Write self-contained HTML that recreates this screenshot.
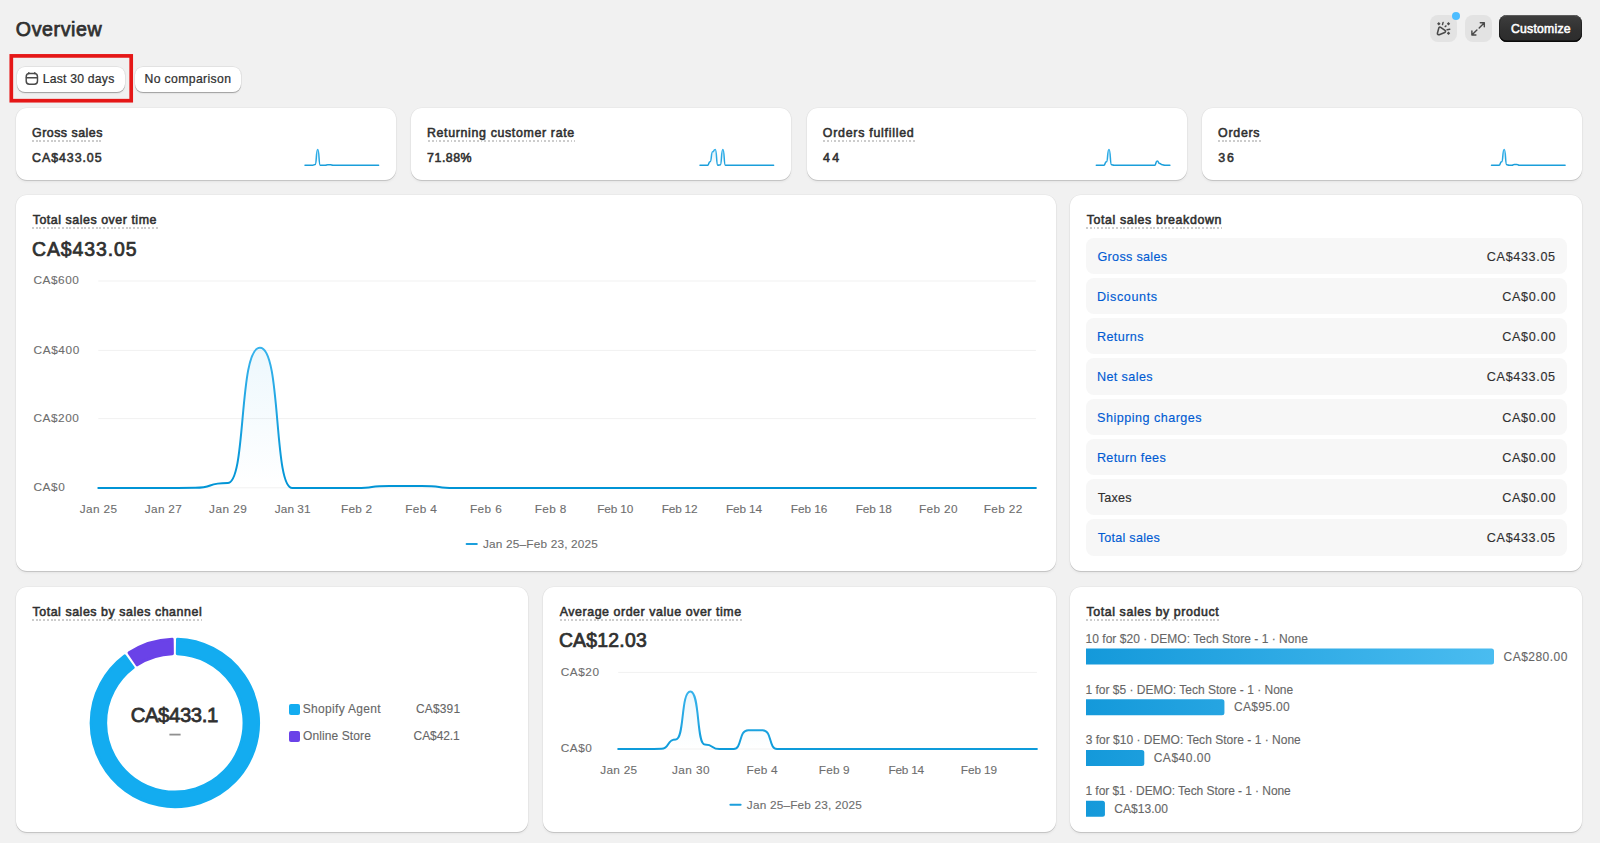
<!DOCTYPE html>
<html lang="en"><head><meta charset="utf-8"><title>Analytics · Overview</title>
<style>
*{box-sizing:border-box;margin:0;padding:0}
html,body{width:1600px;height:843px;overflow:hidden;background:#f1f1f1}
body{position:relative;font-family:"Liberation Sans", sans-serif;-webkit-font-smoothing:antialiased}
.card{position:absolute;background:#fff;border-radius:11px;box-shadow:0 1px 0 0 rgba(26,26,26,.13),0 0 0 .6px rgba(0,0,0,.05),0 1.5px 2.5px 0 rgba(26,26,26,.06)}
.row{position:absolute;left:1086.1px;width:480.7px;height:36.3px;border-radius:8px;background:#f7f7f7}
.t{position:absolute;white-space:pre;line-height:1;font-style:normal;font-weight:400;text-decoration:none;display:block}
.t i{position:absolute;height:2px;background-image:repeating-linear-gradient(90deg,#cccccc 0,#cccccc 1.9px,transparent 1.9px,transparent 3.75px)}
.viz{position:absolute;left:0;top:0;pointer-events:none}
.sq{position:absolute;width:11.4px;height:11.4px;border-radius:2px}
.btn{position:absolute;background:#fff;border-radius:8px;box-shadow:0 1px 0 0 rgba(0,0,0,.22),0 0 0 .7px rgba(0,0,0,.08),0 1.5px 1.5px rgba(0,0,0,.06)}
.ibtn{position:absolute;background:#e3e3e3;border-radius:8px;width:27px;height:27px;top:14.8px}
.pbtn{position:absolute;left:1499.2px;top:15px;width:83.2px;height:27px;border-radius:8px;background:linear-gradient(180deg,#3e3e3e 0,#313131 55%,#2c2c2c 100%);box-shadow:inset 0 1px 0 rgba(255,255,255,.16),inset 0 -1.5px 0 #0a0a0a,inset 1px 0 0 #222,inset -1px 0 0 #222}
.dot{position:absolute;left:1452.1px;top:12.1px;width:8px;height:8px;border-radius:50%;background:#4dbdff}
</style></head>
<body>
<main>
<div class="btn" style="left:16.6px;top:66.7px;width:108.7px;height:25px"></div>
<div class="btn" style="left:134.5px;top:66.7px;width:106px;height:25px"></div>
<div class="ibtn" style="left:1430.1px"></div><div class="ibtn" style="left:1464.6px"></div><div class="dot"></div>
<div class="pbtn"></div>
<section class="card" style="left:16px;top:107.8px;width:380.0px;height:72.3px"></section>
<section class="card" style="left:411.4px;top:107.8px;width:380.0px;height:72.3px"></section>
<section class="card" style="left:806.8px;top:107.8px;width:380.0px;height:72.3px"></section>
<section class="card" style="left:1202.2px;top:107.8px;width:380.0px;height:72.3px"></section>
<section class="card" style="left:16px;top:194.8px;width:1039.7px;height:376.3px"></section>
<section class="card" style="left:1070.2px;top:194.8px;width:512.1px;height:376.3px"></section>
<section class="card" style="left:16px;top:586.6px;width:512.1px;height:245.0px"></section>
<section class="card" style="left:543.1px;top:586.6px;width:512.7px;height:245.0px"></section>
<section class="card" style="left:1070.2px;top:586.6px;width:512.1px;height:245.0px"></section>
<div class="row" style="top:237.70px"></div>
<div class="row" style="top:277.92px"></div>
<div class="row" style="top:318.14px"></div>
<div class="row" style="top:358.36px"></div>
<div class="row" style="top:398.58px"></div>
<div class="row" style="top:438.80px"></div>
<div class="row" style="top:479.02px"></div>
<div class="row" style="top:519.24px"></div>
<i class="sq" style="left:288.8px;top:703.6px;background:#13acf0"></i><i class="sq" style="left:288.8px;top:730.9px;background:#6a42e8"></i>
<svg class="viz" width="1600" height="843" viewBox="0 0 1600 843">
<rect x="11.3" y="55.9" width="119.9" height="44.8" fill="none" stroke="#e51717" stroke-width="3.7"/>
<rect x="98.3" y="280.50" width="937.6" height="1" fill="#f1f1f1"/>
<rect x="98.3" y="349.90" width="937.6" height="1" fill="#f1f1f1"/>
<rect x="98.3" y="418.10" width="937.6" height="1" fill="#f1f1f1"/>
<rect x="98.3" y="487.30" width="937.6" height="1" fill="#f1f1f1"/>
<defs><linearGradient id="ml" gradientUnits="userSpaceOnUse" x1="0" y1="488.0" x2="0" y2="347.5"><stop offset="0" stop-color="#0094d5"/><stop offset="1" stop-color="#38b3ec"/></linearGradient><linearGradient id="ma" gradientUnits="userSpaceOnUse" x1="0" y1="347.5" x2="0" y2="488.0"><stop offset="0" stop-color="#2aa9e4" stop-opacity="0.085"/><stop offset="1" stop-color="#2aa9e4" stop-opacity="0"/></linearGradient></defs><path d="M98.30,488.00L130.63,488.00L162.96,488.00C182.04,488.00 173.63,487.79 195.29,487.79C214.37,487.79 205.96,483.00 227.62,483.00C246.70,483.00 238.29,347.76 259.96,347.76C281.62,347.76 273.21,488.00 292.29,488.00L324.62,488.00L356.95,488.00C376.02,488.00 367.62,486.00 389.28,486.00L421.61,486.00C443.27,486.00 434.87,488.00 453.94,488.00L486.27,488.00L518.60,488.00L550.93,488.00L583.27,488.00L615.60,488.00L647.93,488.00L680.26,488.00L712.59,488.00L744.92,488.00L777.25,488.00L809.58,488.00L841.91,488.00L874.24,488.00L906.58,488.00L938.91,488.00L971.24,488.00L1003.57,488.00L1035.90,488.00L1035.90,488.00L98.30,488.00Z" fill="url(#ma)"/><path d="M98.30,488.00L130.63,488.00L162.96,488.00C182.04,488.00 173.63,487.79 195.29,487.79C214.37,487.79 205.96,483.00 227.62,483.00C246.70,483.00 238.29,347.76 259.96,347.76C281.62,347.76 273.21,488.00 292.29,488.00L324.62,488.00L356.95,488.00C376.02,488.00 367.62,486.00 389.28,486.00L421.61,486.00C443.27,486.00 434.87,488.00 453.94,488.00L486.27,488.00L518.60,488.00L550.93,488.00L583.27,488.00L615.60,488.00L647.93,488.00L680.26,488.00L712.59,488.00L744.92,488.00L777.25,488.00L809.58,488.00L841.91,488.00L874.24,488.00L906.58,488.00L938.91,488.00L971.24,488.00L1003.57,488.00L1035.90,488.00" fill="none" stroke="url(#ml)" stroke-width="2" stroke-linecap="round" stroke-linejoin="round"/>
<rect x="465.6" y="542.9" width="12.2" height="2" rx="1" fill="#1c9fdc"/>
<rect x="618.2" y="671.90" width="418.7" height="1" fill="#f1f1f1"/>
<rect x="618.2" y="748.50" width="418.7" height="1" fill="#f1f1f1"/>
<defs><linearGradient id="vl" gradientUnits="userSpaceOnUse" x1="0" y1="749.0" x2="0" y2="691.5"><stop offset="0" stop-color="#0e9bda"/><stop offset="1" stop-color="#38b3ec"/></linearGradient><linearGradient id="va" gradientUnits="userSpaceOnUse" x1="0" y1="691.5" x2="0" y2="749.0"><stop offset="0" stop-color="#2aa9e4" stop-opacity="0.085"/><stop offset="1" stop-color="#2aa9e4" stop-opacity="0"/></linearGradient></defs><path d="M618.20,749.00L632.64,749.00L647.08,749.00C655.59,749.00 651.84,748.81 661.51,748.81C670.03,748.81 666.28,739.41 675.95,739.41C684.47,739.41 680.72,691.48 690.39,691.48C700.06,691.48 696.31,744.59 704.83,744.59C714.50,744.59 710.75,749.00 719.27,749.00L733.70,749.00C742.22,749.00 738.47,730.21 748.14,730.21L762.58,730.21C772.25,730.21 768.50,749.00 777.02,749.00L791.46,749.00L805.89,749.00L820.33,749.00L834.77,749.00L849.21,749.00L863.64,749.00L878.08,749.00L892.52,749.00L906.96,749.00L921.40,749.00L935.83,749.00L950.27,749.00L964.71,749.00L979.15,749.00L993.59,749.00L1008.02,749.00L1022.46,749.00L1036.90,749.00L1036.90,749.00L618.20,749.00Z" fill="url(#va)"/><path d="M618.20,749.00L632.64,749.00L647.08,749.00C655.59,749.00 651.84,748.81 661.51,748.81C670.03,748.81 666.28,739.41 675.95,739.41C684.47,739.41 680.72,691.48 690.39,691.48C700.06,691.48 696.31,744.59 704.83,744.59C714.50,744.59 710.75,749.00 719.27,749.00L733.70,749.00C742.22,749.00 738.47,730.21 748.14,730.21L762.58,730.21C772.25,730.21 768.50,749.00 777.02,749.00L791.46,749.00L805.89,749.00L820.33,749.00L834.77,749.00L849.21,749.00L863.64,749.00L878.08,749.00L892.52,749.00L906.96,749.00L921.40,749.00L935.83,749.00L950.27,749.00L964.71,749.00L979.15,749.00L993.59,749.00L1008.02,749.00L1022.46,749.00L1036.90,749.00" fill="none" stroke="url(#vl)" stroke-width="2" stroke-linecap="round" stroke-linejoin="round"/>
<rect x="729.4" y="803.7" width="12.2" height="2" rx="1" fill="#1c9fdc"/>
<defs><linearGradient id="s1l" gradientUnits="userSpaceOnUse" x1="0" y1="165.2" x2="0" y2="149.4"><stop offset="0" stop-color="#1a9eda"/><stop offset="1" stop-color="#38b3ec"/></linearGradient><linearGradient id="s1a" gradientUnits="userSpaceOnUse" x1="0" y1="149.4" x2="0" y2="165.2"><stop offset="0" stop-color="#2aa9e4" stop-opacity="0.16"/><stop offset="1" stop-color="#2aa9e4" stop-opacity="0"/></linearGradient></defs><path d="M305.00,165.20L307.54,165.20L310.08,165.20L312.61,165.20C314.11,165.20 313.45,164.57 315.15,164.57C316.65,164.57 315.99,149.40 317.69,149.40C319.39,149.40 318.73,165.20 320.23,165.20L322.77,165.20L325.30,165.20C326.80,165.20 326.14,164.73 327.84,164.73L330.38,164.73C332.08,164.73 331.42,165.20 332.92,165.20L335.46,165.20L337.99,165.20L340.53,165.20L343.07,165.20L345.61,165.20L348.14,165.20L350.68,165.20L353.22,165.20L355.76,165.20L358.30,165.20L360.83,165.20L363.37,165.20L365.91,165.20L368.45,165.20L370.99,165.20L373.52,165.20L376.06,165.20L378.60,165.20L378.60,165.20L305.00,165.20Z" fill="url(#s1a)"/><path d="M305.00,165.20L307.54,165.20L310.08,165.20L312.61,165.20C314.11,165.20 313.45,164.57 315.15,164.57C316.65,164.57 315.99,149.40 317.69,149.40C319.39,149.40 318.73,165.20 320.23,165.20L322.77,165.20L325.30,165.20C326.80,165.20 326.14,164.73 327.84,164.73L330.38,164.73C332.08,164.73 331.42,165.20 332.92,165.20L335.46,165.20L337.99,165.20L340.53,165.20L343.07,165.20L345.61,165.20L348.14,165.20L350.68,165.20L353.22,165.20L355.76,165.20L358.30,165.20L360.83,165.20L363.37,165.20L365.91,165.20L368.45,165.20L370.99,165.20L373.52,165.20L376.06,165.20L378.60,165.20" fill="none" stroke="url(#s1l)" stroke-width="1.5" stroke-linecap="round" stroke-linejoin="round"/>
<defs><linearGradient id="s2l" gradientUnits="userSpaceOnUse" x1="0" y1="165.2" x2="0" y2="149.4"><stop offset="0" stop-color="#1a9eda"/><stop offset="1" stop-color="#38b3ec"/></linearGradient><linearGradient id="s2a" gradientUnits="userSpaceOnUse" x1="0" y1="149.4" x2="0" y2="165.2"><stop offset="0" stop-color="#2aa9e4" stop-opacity="0.16"/><stop offset="1" stop-color="#2aa9e4" stop-opacity="0"/></linearGradient></defs><path d="M700.00,165.20L702.54,165.20L705.08,165.20L707.61,165.20C709.11,165.20 708.45,161.72 710.15,161.72C711.65,161.72 710.99,151.77 712.69,151.77C714.19,151.77 713.53,149.40 715.23,149.40C716.93,149.40 716.27,165.20 717.77,165.20C719.26,165.20 718.60,164.88 720.30,164.88C721.80,164.88 721.14,149.40 722.84,149.40C724.54,149.40 723.88,165.20 725.38,165.20L727.92,165.20L730.46,165.20L732.99,165.20L735.53,165.20L738.07,165.20L740.61,165.20L743.14,165.20L745.68,165.20L748.22,165.20L750.76,165.20L753.30,165.20L755.83,165.20L758.37,165.20L760.91,165.20L763.45,165.20L765.99,165.20L768.52,165.20L771.06,165.20L773.60,165.20L773.60,165.20L700.00,165.20Z" fill="url(#s2a)"/><path d="M700.00,165.20L702.54,165.20L705.08,165.20L707.61,165.20C709.11,165.20 708.45,161.72 710.15,161.72C711.65,161.72 710.99,151.77 712.69,151.77C714.19,151.77 713.53,149.40 715.23,149.40C716.93,149.40 716.27,165.20 717.77,165.20C719.26,165.20 718.60,164.88 720.30,164.88C721.80,164.88 721.14,149.40 722.84,149.40C724.54,149.40 723.88,165.20 725.38,165.20L727.92,165.20L730.46,165.20L732.99,165.20L735.53,165.20L738.07,165.20L740.61,165.20L743.14,165.20L745.68,165.20L748.22,165.20L750.76,165.20L753.30,165.20L755.83,165.20L758.37,165.20L760.91,165.20L763.45,165.20L765.99,165.20L768.52,165.20L771.06,165.20L773.60,165.20" fill="none" stroke="url(#s2l)" stroke-width="1.5" stroke-linecap="round" stroke-linejoin="round"/>
<defs><linearGradient id="s3l" gradientUnits="userSpaceOnUse" x1="0" y1="165.2" x2="0" y2="149.4"><stop offset="0" stop-color="#1a9eda"/><stop offset="1" stop-color="#38b3ec"/></linearGradient><linearGradient id="s3a" gradientUnits="userSpaceOnUse" x1="0" y1="149.4" x2="0" y2="165.2"><stop offset="0" stop-color="#2aa9e4" stop-opacity="0.16"/><stop offset="1" stop-color="#2aa9e4" stop-opacity="0"/></linearGradient></defs><path d="M1096.30,165.20L1098.84,165.20L1101.38,165.20L1103.91,165.20C1105.41,165.20 1104.75,161.72 1106.45,161.72C1107.95,161.72 1107.29,149.40 1108.99,149.40C1110.69,149.40 1110.03,164.73 1111.53,164.73C1113.23,164.73 1112.57,165.20 1114.07,165.20L1116.60,165.20L1119.14,165.20L1121.68,165.20L1124.22,165.20L1126.76,165.20L1129.29,165.20L1131.83,165.20L1134.37,165.20L1136.91,165.20L1139.44,165.20L1141.98,165.20L1144.52,165.20L1147.06,165.20L1149.60,165.20L1152.13,165.20L1154.67,165.20C1156.17,165.20 1155.51,161.09 1157.21,161.09C1158.91,161.09 1158.25,163.62 1159.75,163.62C1161.45,163.62 1160.79,164.73 1162.29,164.73C1163.99,164.73 1163.33,165.20 1164.82,165.20L1167.36,165.20L1169.90,165.20L1169.90,165.20L1096.30,165.20Z" fill="url(#s3a)"/><path d="M1096.30,165.20L1098.84,165.20L1101.38,165.20L1103.91,165.20C1105.41,165.20 1104.75,161.72 1106.45,161.72C1107.95,161.72 1107.29,149.40 1108.99,149.40C1110.69,149.40 1110.03,164.73 1111.53,164.73C1113.23,164.73 1112.57,165.20 1114.07,165.20L1116.60,165.20L1119.14,165.20L1121.68,165.20L1124.22,165.20L1126.76,165.20L1129.29,165.20L1131.83,165.20L1134.37,165.20L1136.91,165.20L1139.44,165.20L1141.98,165.20L1144.52,165.20L1147.06,165.20L1149.60,165.20L1152.13,165.20L1154.67,165.20C1156.17,165.20 1155.51,161.09 1157.21,161.09C1158.91,161.09 1158.25,163.62 1159.75,163.62C1161.45,163.62 1160.79,164.73 1162.29,164.73C1163.99,164.73 1163.33,165.20 1164.82,165.20L1167.36,165.20L1169.90,165.20" fill="none" stroke="url(#s3l)" stroke-width="1.5" stroke-linecap="round" stroke-linejoin="round"/>
<defs><linearGradient id="s4l" gradientUnits="userSpaceOnUse" x1="0" y1="165.2" x2="0" y2="149.4"><stop offset="0" stop-color="#1a9eda"/><stop offset="1" stop-color="#38b3ec"/></linearGradient><linearGradient id="s4a" gradientUnits="userSpaceOnUse" x1="0" y1="149.4" x2="0" y2="165.2"><stop offset="0" stop-color="#2aa9e4" stop-opacity="0.16"/><stop offset="1" stop-color="#2aa9e4" stop-opacity="0"/></linearGradient></defs><path d="M1491.50,165.20L1494.04,165.20L1496.58,165.20L1499.11,165.20C1500.61,165.20 1499.95,161.72 1501.65,161.72C1503.15,161.72 1502.49,149.40 1504.19,149.40C1505.89,149.40 1505.23,164.73 1506.73,164.73C1508.43,164.73 1507.77,165.20 1509.27,165.20L1511.80,165.20C1513.30,165.20 1512.64,164.41 1514.34,164.41L1516.88,164.41C1518.58,164.41 1517.92,165.20 1519.42,165.20L1521.96,165.20L1524.49,165.20L1527.03,165.20L1529.57,165.20L1532.11,165.20L1534.64,165.20L1537.18,165.20L1539.72,165.20L1542.26,165.20L1544.80,165.20L1547.33,165.20L1549.87,165.20L1552.41,165.20L1554.95,165.20L1557.49,165.20L1560.02,165.20L1562.56,165.20L1565.10,165.20L1565.10,165.20L1491.50,165.20Z" fill="url(#s4a)"/><path d="M1491.50,165.20L1494.04,165.20L1496.58,165.20L1499.11,165.20C1500.61,165.20 1499.95,161.72 1501.65,161.72C1503.15,161.72 1502.49,149.40 1504.19,149.40C1505.89,149.40 1505.23,164.73 1506.73,164.73C1508.43,164.73 1507.77,165.20 1509.27,165.20L1511.80,165.20C1513.30,165.20 1512.64,164.41 1514.34,164.41L1516.88,164.41C1518.58,164.41 1517.92,165.20 1519.42,165.20L1521.96,165.20L1524.49,165.20L1527.03,165.20L1529.57,165.20L1532.11,165.20L1534.64,165.20L1537.18,165.20L1539.72,165.20L1542.26,165.20L1544.80,165.20L1547.33,165.20L1549.87,165.20L1552.41,165.20L1554.95,165.20L1557.49,165.20L1560.02,165.20L1562.56,165.20L1565.10,165.20" fill="none" stroke="url(#s4l)" stroke-width="1.5" stroke-linecap="round" stroke-linejoin="round"/>
<path d="M177.52,639.24A83.70,83.70 0 1 1 124.69,655.90L133.17,667.66A69.20,69.20 0 1 0 177.32,653.74Z" fill="#13acf0" stroke="#13acf0" stroke-width="3.0" stroke-linejoin="round"/>
<path d="M129.06,652.84A83.70,83.70 0 0 1 172.18,639.24L172.38,653.74A69.20,69.20 0 0 0 137.21,664.83Z" fill="#6a42e8" stroke="#6a42e8" stroke-width="3.0" stroke-linejoin="round"/>
<rect x="169.4" y="733.7" width="11.2" height="1.8" fill="#909090"/>
<defs><linearGradient id="bg" gradientUnits="userSpaceOnUse" x1="1086.0" y1="0" x2="1494.0" y2="0"><stop offset="0" stop-color="#1499da"/><stop offset="1" stop-color="#4abcf0"/></linearGradient></defs>
<path d="M1086.0,648.60H1491.50a2.5,2.5 0 0 1 2.5,2.5V662.00a2.5,2.5 0 0 1 -2.5,2.5H1086.0Z" fill="url(#bg)"/>
<path d="M1086.0,699.33H1221.93a2.5,2.5 0 0 1 2.5,2.5V712.73a2.5,2.5 0 0 1 -2.5,2.5H1086.0Z" fill="url(#bg)"/>
<path d="M1086.0,750.06H1141.79a2.5,2.5 0 0 1 2.5,2.5V763.46a2.5,2.5 0 0 1 -2.5,2.5H1086.0Z" fill="url(#bg)"/>
<path d="M1086.0,800.79H1102.44a2.5,2.5 0 0 1 2.5,2.5V814.19a2.5,2.5 0 0 1 -2.5,2.5H1086.0Z" fill="url(#bg)"/>
</svg>
<svg class="viz" width="1600" height="843" viewBox="0 0 1600 843" fill="none" stroke="#4a4a4a" stroke-width="1.45" stroke-linecap="round" stroke-linejoin="round">
<!-- calendar -->
<rect x="26.2" y="73.5" width="11.3" height="10.8" rx="3.2"/>
<path d="M26.4 77.7H37.3M28.8 72.6V73.4M34.8 72.6V73.4"/>
<!-- confetti -->
<path d="M1440.7 27.3 1445 30.3a1.25 1.25 0 0 1-.25 2.2l-5.5 2.2a1.35 1.35 0 0 1-1.8-1.6l1.4-5.2a1 1 0 0 1 1.5-.6z" stroke-width="1.6"/>
<path d="M1443.1 22.4 1442.5 24.6M1445.2 26.6 1446.0 25.9M1447.1 29.8 1449.8 29.2"/>
<g fill="#4a4a4a" stroke="none">
<path d="M1438.8 22.0 1440.5 23.7 1438.8 25.4 1437.1 23.7z"/>
<path d="M1448.5 22.0 1450.2 23.7 1448.5 25.4 1446.8 23.7z"/>
<path d="M1448.5 31.5 1450.2 33.2 1448.5 34.9 1446.8 33.2z"/>
</g>
<!-- expand arrows -->
<path d="M1480.3 22.8H1484.3V26.8M1484.1 23 1479.2 27.9M1471.9 31V35H1475.9M1472.1 34.8 1476.9 30.0"/>
</svg>

<h1 class="t" style="left:15.84px;top:20px;font-size:19.6px;color:#303030;-webkit-text-stroke:0.75px #303030;letter-spacing:0.598px;">Overview</h1>
<span class="t" style="left:42.72px;top:73px;font-size:12.2px;color:#303030;-webkit-text-stroke:0.24px #303030;letter-spacing:0.219px;">Last 30 days</span>
<span class="t" style="left:144.50px;top:73px;font-size:12.2px;color:#303030;-webkit-text-stroke:0.24px #303030;letter-spacing:0.381px;">No comparison</span>
<span class="t" style="left:1511.04px;top:23px;font-size:12.2px;color:#ffffff;-webkit-text-stroke:0.54px #ffffff;letter-spacing:0.247px;">Customize</span>
<span class="t u" style="left:32.06px;top:127px;font-size:12.4px;color:#303030;-webkit-text-stroke:0.55px #303030;letter-spacing:0.494px;">Gross sales<i style="width:71.2px;left:0.14px;top:13.20px"></i></span>
<span class="t" style="left:32.06px;top:152px;font-size:12.4px;color:#303030;-webkit-text-stroke:0.55px #303030;letter-spacing:0.944px;">CA$433.05</span>
<span class="t u" style="left:426.98px;top:127px;font-size:12.4px;color:#303030;-webkit-text-stroke:0.55px #303030;letter-spacing:0.649px;">Returning customer rate<i style="width:147.8px;left:0.62px;top:13.20px"></i></span>
<span class="t" style="left:427.11px;top:152px;font-size:12.4px;color:#303030;-webkit-text-stroke:0.55px #303030;letter-spacing:0.493px;">71.88%</span>
<span class="t u" style="left:822.82px;top:127px;font-size:12.4px;color:#303030;-webkit-text-stroke:0.55px #303030;letter-spacing:0.731px;">Orders fulfilled<i style="width:91.7px;left:0.18px;top:13.20px"></i></span>
<span class="t" style="left:823.00px;top:152px;font-size:12.4px;color:#303030;-webkit-text-stroke:0.55px #303030;letter-spacing:2.397px;">44</span>
<span class="t u" style="left:1218.08px;top:127px;font-size:12.4px;color:#303030;-webkit-text-stroke:0.55px #303030;letter-spacing:0.719px;">Orders<i style="width:42.5px;left:0.32px;top:13.20px"></i></span>
<span class="t" style="left:1218.28px;top:152px;font-size:12.4px;color:#303030;-webkit-text-stroke:0.55px #303030;letter-spacing:1.899px;">36</span>
<span class="t u" style="left:32.65px;top:214px;font-size:12.4px;color:#303030;-webkit-text-stroke:0.55px #303030;letter-spacing:0.542px;">Total sales over time<i style="width:125.2px;left:-0.25px;top:13.20px"></i></span>
<span class="t" style="left:32.02px;top:240px;font-size:19.4px;color:#303030;-webkit-text-stroke:0.74px #303030;letter-spacing:0.942px;">CA$433.05</span>
<span class="t" style="left:33.49px;top:275px;font-size:11.8px;color:#6e6e6e;-webkit-text-stroke:0.11px #6e6e6e;letter-spacing:0.533px;">CA$600</span>
<span class="t" style="left:33.49px;top:345px;font-size:11.8px;color:#6e6e6e;-webkit-text-stroke:0.11px #6e6e6e;letter-spacing:0.636px;">CA$400</span>
<span class="t" style="left:33.49px;top:413px;font-size:11.8px;color:#6e6e6e;-webkit-text-stroke:0.11px #6e6e6e;letter-spacing:0.533px;">CA$200</span>
<span class="t" style="left:33.49px;top:482px;font-size:11.8px;color:#6e6e6e;-webkit-text-stroke:0.11px #6e6e6e;letter-spacing:0.594px;">CA$0</span>
<span class="t" style="left:79.82px;top:504px;font-size:11.8px;color:#6e6e6e;-webkit-text-stroke:0.11px #6e6e6e;letter-spacing:0.372px;">Jan 25</span>
<span class="t" style="left:144.82px;top:504px;font-size:11.8px;color:#6e6e6e;-webkit-text-stroke:0.11px #6e6e6e;letter-spacing:0.307px;">Jan 27</span>
<span class="t" style="left:209.03px;top:504px;font-size:11.8px;color:#6e6e6e;-webkit-text-stroke:0.11px #6e6e6e;letter-spacing:0.493px;">Jan 29</span>
<span class="t" style="left:274.82px;top:504px;font-size:11.8px;color:#6e6e6e;-webkit-text-stroke:0.11px #6e6e6e;letter-spacing:0.053px;">Jan 31</span>
<span class="t" style="left:341.00px;top:504px;font-size:11.8px;color:#6e6e6e;-webkit-text-stroke:0.11px #6e6e6e;letter-spacing:0.250px;">Feb 2</span>
<span class="t" style="left:405.34px;top:504px;font-size:11.8px;color:#6e6e6e;-webkit-text-stroke:0.11px #6e6e6e;letter-spacing:0.320px;">Feb 4</span>
<span class="t" style="left:470.00px;top:504px;font-size:11.8px;color:#6e6e6e;-webkit-text-stroke:0.11px #6e6e6e;letter-spacing:0.381px;">Feb 6</span>
<span class="t" style="left:534.63px;top:504px;font-size:11.8px;color:#6e6e6e;-webkit-text-stroke:0.11px #6e6e6e;letter-spacing:0.370px;">Feb 8</span>
<span class="t" style="left:597.34px;top:504px;font-size:11.8px;color:#6e6e6e;-webkit-text-stroke:0.11px #6e6e6e;letter-spacing:-0.162px;">Feb 10</span>
<span class="t" style="left:661.79px;top:504px;font-size:11.8px;color:#6e6e6e;-webkit-text-stroke:0.11px #6e6e6e;letter-spacing:-0.192px;">Feb 12</span>
<span class="t" style="left:726.00px;top:504px;font-size:11.8px;color:#6e6e6e;-webkit-text-stroke:0.11px #6e6e6e;letter-spacing:-0.138px;">Feb 14</span>
<span class="t" style="left:790.82px;top:504px;font-size:11.8px;color:#6e6e6e;-webkit-text-stroke:0.11px #6e6e6e;letter-spacing:-0.070px;">Feb 16</span>
<span class="t" style="left:855.79px;top:504px;font-size:11.8px;color:#6e6e6e;-webkit-text-stroke:0.11px #6e6e6e;letter-spacing:-0.159px;">Feb 18</span>
<span class="t" style="left:919.00px;top:504px;font-size:11.8px;color:#6e6e6e;-webkit-text-stroke:0.11px #6e6e6e;letter-spacing:0.363px;">Feb 20</span>
<span class="t" style="left:983.63px;top:504px;font-size:11.8px;color:#6e6e6e;-webkit-text-stroke:0.11px #6e6e6e;letter-spacing:0.375px;">Feb 22</span>
<span class="t" style="left:482.96px;top:539px;font-size:11.8px;color:#6e6e6e;-webkit-text-stroke:0.11px #6e6e6e;letter-spacing:0.191px;">Jan 25–Feb 23, 2025</span>
<span class="t u" style="left:1086.65px;top:214px;font-size:12.4px;color:#303030;-webkit-text-stroke:0.55px #303030;letter-spacing:0.606px;">Total sales breakdown<i style="width:136.0px;left:-0.25px;top:13.20px"></i></span>
<a class="t" style="left:1097.51px;top:251px;font-size:12.6px;color:#005bd3;-webkit-text-stroke:0.14px #005bd3;letter-spacing:0.300px;">Gross sales</a>
<span class="t" style="left:1486.87px;top:251px;font-size:12.6px;color:#303030;-webkit-text-stroke:0.14px #303030;letter-spacing:0.651px;">CA$433.05</span>
<a class="t" style="left:1096.88px;top:291px;font-size:12.6px;color:#005bd3;-webkit-text-stroke:0.14px #005bd3;letter-spacing:0.616px;">Discounts</a>
<span class="t" style="left:1502.15px;top:291px;font-size:12.6px;color:#303030;-webkit-text-stroke:0.14px #303030;letter-spacing:0.718px;">CA$0.00</span>
<a class="t" style="left:1096.88px;top:331px;font-size:12.6px;color:#005bd3;-webkit-text-stroke:0.14px #005bd3;letter-spacing:0.428px;">Returns</a>
<span class="t" style="left:1502.15px;top:331px;font-size:12.6px;color:#303030;-webkit-text-stroke:0.14px #303030;letter-spacing:0.718px;">CA$0.00</span>
<a class="t" style="left:1096.88px;top:371px;font-size:12.6px;color:#005bd3;-webkit-text-stroke:0.14px #005bd3;letter-spacing:0.411px;">Net sales</a>
<span class="t" style="left:1486.87px;top:371px;font-size:12.6px;color:#303030;-webkit-text-stroke:0.14px #303030;letter-spacing:0.651px;">CA$433.05</span>
<a class="t" style="left:1097.01px;top:412px;font-size:12.6px;color:#005bd3;-webkit-text-stroke:0.14px #005bd3;letter-spacing:0.488px;">Shipping charges</a>
<span class="t" style="left:1502.15px;top:412px;font-size:12.6px;color:#303030;-webkit-text-stroke:0.14px #303030;letter-spacing:0.718px;">CA$0.00</span>
<a class="t" style="left:1096.88px;top:452px;font-size:12.6px;color:#005bd3;-webkit-text-stroke:0.14px #005bd3;letter-spacing:0.381px;">Return fees</a>
<span class="t" style="left:1502.15px;top:452px;font-size:12.6px;color:#303030;-webkit-text-stroke:0.14px #303030;letter-spacing:0.718px;">CA$0.00</span>
<span class="t" style="left:1097.68px;top:492px;font-size:12.6px;color:#303030;-webkit-text-stroke:0.14px #303030;letter-spacing:0.262px;">Taxes</span>
<span class="t" style="left:1502.15px;top:492px;font-size:12.6px;color:#303030;-webkit-text-stroke:0.14px #303030;letter-spacing:0.718px;">CA$0.00</span>
<a class="t" style="left:1097.68px;top:532px;font-size:12.6px;color:#005bd3;-webkit-text-stroke:0.14px #005bd3;letter-spacing:0.267px;">Total sales</a>
<span class="t" style="left:1486.87px;top:532px;font-size:12.6px;color:#303030;-webkit-text-stroke:0.14px #303030;letter-spacing:0.651px;">CA$433.05</span>
<span class="t u" style="left:32.49px;top:606px;font-size:12.4px;color:#303030;-webkit-text-stroke:0.55px #303030;letter-spacing:0.551px;">Total sales by sales channel<i style="width:170.2px;left:-0.29px;top:13.20px"></i></span>
<span class="t" style="left:130.66px;top:705px;font-size:20.3px;color:#303030;-webkit-text-stroke:0.77px #303030;letter-spacing:-0.369px;">CA$433.1</span>
<span class="t" style="left:302.65px;top:703px;font-size:12.0px;color:#666666;-webkit-text-stroke:0.11px #666666;letter-spacing:0.334px;">Shopify Agent</span>
<span class="t" style="left:302.97px;top:730px;font-size:12.0px;color:#666666;-webkit-text-stroke:0.11px #666666;letter-spacing:0.104px;">Online Store</span>
<span class="t" style="left:415.96px;top:703px;font-size:12.0px;color:#666666;-webkit-text-stroke:0.11px #666666;letter-spacing:0.161px;">CA$391</span>
<span class="t" style="left:413.58px;top:730px;font-size:12.0px;color:#666666;-webkit-text-stroke:0.11px #666666;letter-spacing:-0.088px;">CA$42.1</span>
<span class="t u" style="left:559.69px;top:606px;font-size:12.4px;color:#303030;-webkit-text-stroke:0.55px #303030;letter-spacing:0.560px;">Average order value over time<i style="width:182.7px;left:-0.19px;top:13.20px"></i></span>
<span class="t" style="left:558.90px;top:631px;font-size:19.4px;color:#303030;-webkit-text-stroke:0.74px #303030;letter-spacing:0.224px;">CA$12.03</span>
<span class="t" style="left:560.81px;top:667px;font-size:11.8px;color:#6e6e6e;-webkit-text-stroke:0.11px #6e6e6e;letter-spacing:0.524px;">CA$20</span>
<span class="t" style="left:560.81px;top:743px;font-size:11.8px;color:#6e6e6e;-webkit-text-stroke:0.11px #6e6e6e;letter-spacing:0.541px;">CA$0</span>
<span class="t" style="left:600.29px;top:765px;font-size:11.8px;color:#6e6e6e;-webkit-text-stroke:0.11px #6e6e6e;letter-spacing:0.286px;">Jan 25</span>
<span class="t" style="left:672.03px;top:765px;font-size:11.8px;color:#6e6e6e;-webkit-text-stroke:0.11px #6e6e6e;letter-spacing:0.433px;">Jan 30</span>
<span class="t" style="left:746.56px;top:765px;font-size:11.8px;color:#6e6e6e;-webkit-text-stroke:0.11px #6e6e6e;letter-spacing:0.187px;">Feb 4</span>
<span class="t" style="left:818.82px;top:765px;font-size:11.8px;color:#6e6e6e;-webkit-text-stroke:0.11px #6e6e6e;letter-spacing:0.175px;">Feb 9</span>
<span class="t" style="left:888.56px;top:765px;font-size:11.8px;color:#6e6e6e;-webkit-text-stroke:0.11px #6e6e6e;letter-spacing:-0.246px;">Feb 14</span>
<span class="t" style="left:960.86px;top:765px;font-size:11.8px;color:#6e6e6e;-webkit-text-stroke:0.11px #6e6e6e;letter-spacing:-0.109px;">Feb 19</span>
<span class="t" style="left:746.82px;top:800px;font-size:11.8px;color:#6e6e6e;-webkit-text-stroke:0.11px #6e6e6e;letter-spacing:0.200px;">Jan 25–Feb 23, 2025</span>
<span class="t u" style="left:1086.46px;top:606px;font-size:12.4px;color:#303030;-webkit-text-stroke:0.55px #303030;letter-spacing:0.591px;">Total sales by product<i style="width:134.2px;left:-0.21px;top:13.20px"></i></span>
<span class="t" style="left:1085.51px;top:633px;font-size:12.0px;color:#666666;-webkit-text-stroke:0.11px #666666;letter-spacing:0.030px;">10 for $20 · DEMO: Tech Store - 1 · None</span>
<span class="t" style="left:1503.49px;top:651px;font-size:12.0px;color:#666666;-webkit-text-stroke:0.11px #666666;letter-spacing:0.488px;">CA$280.00</span>
<span class="t" style="left:1085.51px;top:684px;font-size:12.0px;color:#666666;-webkit-text-stroke:0.11px #666666;letter-spacing:-0.005px;">1 for $5 · DEMO: Tech Store - 1 · None</span>
<span class="t" style="left:1233.93px;top:701px;font-size:12.0px;color:#666666;-webkit-text-stroke:0.11px #666666;letter-spacing:0.338px;">CA$95.00</span>
<span class="t" style="left:1085.66px;top:734px;font-size:12.0px;color:#666666;-webkit-text-stroke:0.11px #666666;letter-spacing:0.015px;">3 for $10 · DEMO: Tech Store - 1 · None</span>
<span class="t" style="left:1153.71px;top:752px;font-size:12.0px;color:#666666;-webkit-text-stroke:0.11px #666666;letter-spacing:0.501px;">CA$40.00</span>
<span class="t" style="left:1085.51px;top:785px;font-size:12.0px;color:#666666;-webkit-text-stroke:0.11px #666666;letter-spacing:-0.070px;">1 for $1 · DEMO: Tech Store - 1 · None</span>
<span class="t" style="left:1114.21px;top:803px;font-size:12.0px;color:#666666;-webkit-text-stroke:0.11px #666666;letter-spacing:0.047px;">CA$13.00</span>
</main>
</body></html>
